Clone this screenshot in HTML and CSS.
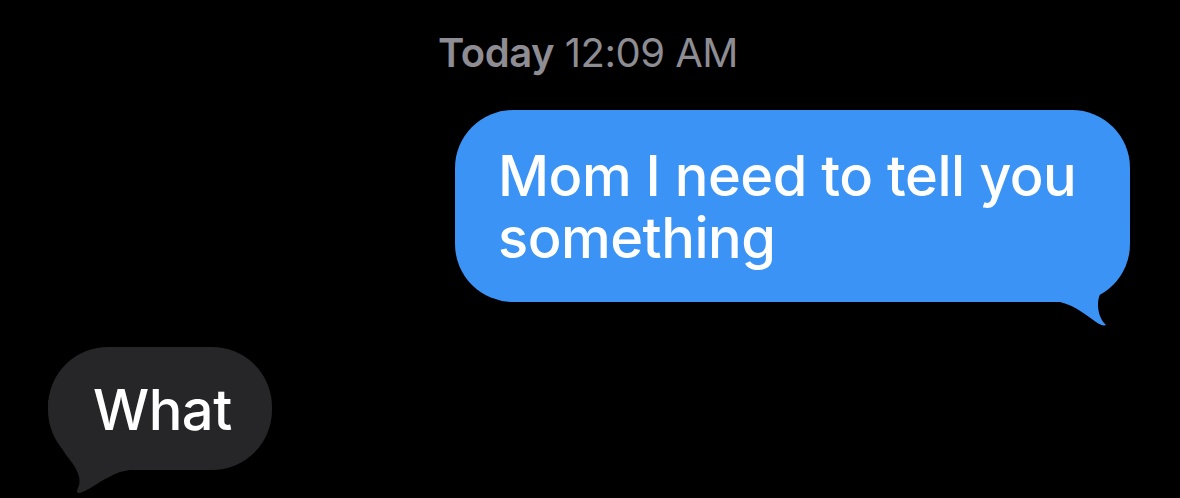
FILE: index.html
```html
<!DOCTYPE html>
<html lang="en">

<head>
  <title>Messages</title>
  <meta charset="UTF-8">
  <meta name="viewport" content="width=device-width, initial-scale=1">
  <link rel="stylesheet" href="styles.css">
</head>

<body>

  <div class="thread">
    <div class="stamp"><strong>Today</strong> 12:09 AM</div>

    <div class="row sent">
      <div class="bubble blue">
        <span class="text">Mom I need to tell you<br>something</span>
        <svg class="tail tail-right" viewBox="0 0 95 100" width="95" height="100">
          <path d="M90 0 C90 22 82 40 66 55 C58 64 56 74 60 86 C62 91 64 93 66 95 C64 96 60 95 56 92 C46 85 36 76 20 72 L0 72 L0 0 Z" />
        </svg>
      </div>
    </div>

    <div class="row received">
      <div class="bubble gray">
        <span class="text">What</span>
        <svg class="tail tail-left" viewBox="0 0 90 100" width="90" height="100">
          <path d="M8 0 C8 25 18 45 30 60 C38 70 42 80 38 88 C36 92 37 93 40 93 C50 90 60 80 80 72 C85 71 88 70 90 70 L90 0 Z" />
        </svg>
      </div>
    </div>
  </div>

</body>

</html>
```

FILE: styles.css
```css
body {
  margin: 0;
  background: #000000;
  font-family: Inter, "Noto Sans", sans-serif;
  height: 498px;
  overflow: hidden;
}

.thread {
  display: flex;
  flex-direction: column;
  padding: 0 50px 0 48px;
}

.stamp {
  text-align: center;
  color: #8d8d93;
  font-size: 40px;
  padding-top: 28px;
  height: 80px;
  box-sizing: border-box;
  letter-spacing: -0.5px;
  margin-left: -2px;
}

.stamp strong {
  font-weight: 600;
}

.row {
  display: flex;
}

.sent {
  justify-content: flex-end;
  margin-top: 30px;
}

.received {
  justify-content: flex-start;
  margin-top: 45px;
}

.bubble {
  position: relative;
  color: #ffffff;
  font-size: 56px;
  line-height: 62px;
  font-weight: 500;
  letter-spacing: -0.5px;
}

/* keep the words above the tail shape */
.bubble .text {
  position: relative;
  z-index: 1;
}

.blue {
  width: 675px;
  height: 192px;
  box-sizing: border-box;
  padding: 35px 0 0 43px;
  background: #3a93f5;
  border-radius: 58px;
}

.gray {
  width: 224px;
  height: 123px;
  box-sizing: border-box;
  padding: 32px 0 0 45px;
  background: #262628;
  border-radius: 60px;
}

/* bubble tails overlap the bottom corner */
.tail {
  position: absolute;
}

.tail-right {
  left: 585px;
  top: 120px;
  fill: #3a93f5;
}

.tail-left {
  left: -8px;
  top: 53px;
  fill: #262628;
}
```
